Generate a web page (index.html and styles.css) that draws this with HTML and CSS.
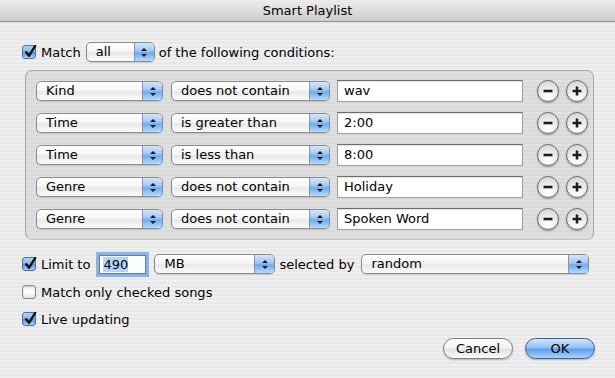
FILE: index.html
```html
<!DOCTYPE html>
<html>
<head>
<meta charset="utf-8">
<link rel="stylesheet" href="styles.css">
</head>
<body>
<div class="win">
  <div class="titlebar">Smart Playlist</div>
  <div class="content">
    <div class="match-row">
      <span class="cb on"><svg viewBox="0 0 14 14" width="14" height="14"><path d="M3.2 7.2 L6 10.8 L12.2 0.8" fill="none" stroke="#111" stroke-width="2.3" stroke-linecap="round" stroke-linejoin="round"/></svg></span>
      <span class="lbl l-match">Match</span>
      <div class="popup p-all"><span class="txt">all</span><span class="step"></span></div>
      <span class="lbl l-of">of the following conditions:</span>
    </div>

    <div class="rules">
      <div class="rule">
        <div class="popup p-field"><span class="txt">Kind</span><span class="step"></span></div>
        <div class="popup p-op"><span class="txt">does not contain</span><span class="step"></span></div>
        <div class="field f-val">wav</div>
        <span class="rb minus"><svg viewBox="0 0 22 22" width="22" height="22"><path d="M6.5 11 H15.5" stroke="#1e1e1e" stroke-width="2.6" stroke-linecap="butt"/></svg></span>
        <span class="rb plus"><svg viewBox="0 0 22 22" width="22" height="22"><path d="M6.5 11 H15.5 M11 6.5 V15.5" stroke="#1e1e1e" stroke-width="2.6"/></svg></span>
      </div>
      <div class="rule">
        <div class="popup p-field"><span class="txt">Time</span><span class="step"></span></div>
        <div class="popup p-op"><span class="txt">is greater than</span><span class="step"></span></div>
        <div class="field f-val">2:00</div>
        <span class="rb minus"><svg viewBox="0 0 22 22" width="22" height="22"><path d="M6.5 11 H15.5" stroke="#1e1e1e" stroke-width="2.6"/></svg></span>
        <span class="rb plus"><svg viewBox="0 0 22 22" width="22" height="22"><path d="M6.5 11 H15.5 M11 6.5 V15.5" stroke="#1e1e1e" stroke-width="2.6"/></svg></span>
      </div>
      <div class="rule">
        <div class="popup p-field"><span class="txt">Time</span><span class="step"></span></div>
        <div class="popup p-op"><span class="txt">is less than</span><span class="step"></span></div>
        <div class="field f-val">8:00</div>
        <span class="rb minus"><svg viewBox="0 0 22 22" width="22" height="22"><path d="M6.5 11 H15.5" stroke="#1e1e1e" stroke-width="2.6"/></svg></span>
        <span class="rb plus"><svg viewBox="0 0 22 22" width="22" height="22"><path d="M6.5 11 H15.5 M11 6.5 V15.5" stroke="#1e1e1e" stroke-width="2.6"/></svg></span>
      </div>
      <div class="rule">
        <div class="popup p-field"><span class="txt">Genre</span><span class="step"></span></div>
        <div class="popup p-op"><span class="txt">does not contain</span><span class="step"></span></div>
        <div class="field f-val">Holiday</div>
        <span class="rb minus"><svg viewBox="0 0 22 22" width="22" height="22"><path d="M6.5 11 H15.5" stroke="#1e1e1e" stroke-width="2.6"/></svg></span>
        <span class="rb plus"><svg viewBox="0 0 22 22" width="22" height="22"><path d="M6.5 11 H15.5 M11 6.5 V15.5" stroke="#1e1e1e" stroke-width="2.6"/></svg></span>
      </div>
      <div class="rule">
        <div class="popup p-field"><span class="txt">Genre</span><span class="step"></span></div>
        <div class="popup p-op"><span class="txt">does not contain</span><span class="step"></span></div>
        <div class="field f-val">Spoken Word</div>
        <span class="rb minus"><svg viewBox="0 0 22 22" width="22" height="22"><path d="M6.5 11 H15.5" stroke="#1e1e1e" stroke-width="2.6"/></svg></span>
        <span class="rb plus"><svg viewBox="0 0 22 22" width="22" height="22"><path d="M6.5 11 H15.5 M11 6.5 V15.5" stroke="#1e1e1e" stroke-width="2.6"/></svg></span>
      </div>
    </div>

    <div class="limit-row">
      <span class="cb on"><svg viewBox="0 0 14 14" width="14" height="14"><path d="M3.2 7.2 L6 10.8 L12.2 0.8" fill="none" stroke="#111" stroke-width="2.3" stroke-linecap="round" stroke-linejoin="round"/></svg></span>
      <span class="lbl l-limit">Limit to</span>
      <div class="field f-num"><span class="sel">490</span></div>
      <div class="popup p-unit"><span class="txt">MB</span><span class="step"></span></div>
      <span class="lbl l-sel">selected by</span>
      <div class="popup p-by"><span class="txt">random</span><span class="step"></span></div>
    </div>

    <div class="opt-row opt-checked">
      <span class="cb"></span>
      <span class="lbl">Match only checked songs</span>
    </div>
    <div class="opt-row opt-live">
      <span class="cb on"><svg viewBox="0 0 14 14" width="14" height="14"><path d="M3.2 7.2 L6 10.8 L12.2 0.8" fill="none" stroke="#111" stroke-width="2.3" stroke-linecap="round" stroke-linejoin="round"/></svg></span>
      <span class="lbl">Live updating</span>
    </div>

    <div class="buttons">
      <span class="btn cancel">Cancel</span>
      <span class="btn ok">OK</span>
    </div>
  </div>
</div>
</body>
</html>
```

FILE: styles.css
```css
* { box-sizing: border-box; }
html, body { margin: 0; padding: 0; }
body {
  width: 615px;
  height: 378px;
  overflow: hidden;
  font-family: "DejaVu Sans", "Liberation Sans", sans-serif;
  font-size: 13px;
  color: #000;
}
.win {
  width: 615px;
  height: 378px;
  background: repeating-linear-gradient(#efefef 0 2px, #e8e8e8 2px 4px);
  display: flex;
  flex-direction: column;
}
.titlebar {
  height: 22px;
  line-height: 21px;
  text-align: center;
  font-size: 13px;
  background: linear-gradient(#ececec, #d9d9d9 60%, #cfcfcf);
  border-bottom: 1px solid #8f8f8f;
  flex: none;
}
.content {
  display: flex;
  flex-direction: column;
  padding: 0 20px 0 22px;
}
.lbl { white-space: nowrap; }

/* checkbox */
.cb {
  width: 14px;
  height: 14px;
  flex: none;
  border-radius: 3px;
  border: 1px solid #888;
  background: linear-gradient(#f2f2f2, #ffffff 50%, #e4e4e4 100%);
  box-shadow: inset 0 1px 2px rgba(0,0,0,.18);
  position: relative;
  overflow: visible;
}
.cb.on {
  border-color: #4d6f9f;
  background: linear-gradient(#b7d2f3, #86b3ea 50%, #5c97e0 55%, #a9d0fa);
  box-shadow: none;
}
.cb svg { position: absolute; left: 0; top: -1px; }

/* popup */
.popup {
  height: 20px;
  display: flex;
  align-items: center;
  border: 1px solid #8a8a8a;
  border-radius: 5px;
  background: linear-gradient(#ffffff 0%, #f6f6f6 45%, #e8e8e8 55%, #fbfbfb 100%);
  box-shadow: 0 1px 1px rgba(0,0,0,.12);
  overflow: hidden;
  padding-left: 9px;
  flex: none;
}
.popup .txt { flex: 1; white-space: nowrap; line-height: 18px; }
.step {
  width: 20px;
  align-self: stretch;
  border-left: 1px solid #7e96b8;
  background: linear-gradient(#d4e6fc, #9fc5f2 45%, #6fa8ec 55%, #b8daff);
  display: flex;
  flex-direction: column;
  align-items: center;
  justify-content: center;
  gap: 3px;
}
.step::before, .step::after {
  content: "";
  width: 0;
  height: 0;
  border-left: 3px solid transparent;
  border-right: 3px solid transparent;
}
.step::before { border-bottom: 3px solid #1a1a1a; }
.step::after { border-top: 3px solid #1a1a1a; }

/* match row */
.match-row {
  margin-top: 20px;
  height: 20px;
  display: flex;
  align-items: center;
}
.l-match { margin-left: 5px; }
.p-all { width: 69px; margin-left: 5px; }
.l-of { margin-left: 4px; }

/* rules box */
.rules {
  margin-top: 8px;
  margin-left: 3px;
  width: 569px;
  height: 170px;
  border: 1px solid #a9a9a9;
  border-bottom-color: #c4c4c4;
  border-radius: 7px;
  background: rgba(0,0,0,.06);
  padding: 9px 0 0 10px;
  display: flex;
  flex-direction: column;
  gap: 10px;
}
.rule {
  height: 22px;
  display: flex;
  align-items: center;
}
.p-field { width: 127px; }
.p-op { width: 159px; margin-left: 8px; }
.field {
  height: 22px;
  border: 1px solid #9c9c9c;
  border-top-color: #6e6e6e;
  background: #fff;
  box-shadow: inset 0 1px 1px rgba(0,0,0,.12);
  padding: 0 6px;
  line-height: 20px;
  white-space: nowrap;
  flex: none;
}
.f-val { width: 186px; margin-left: 7px; }
.rb {
  width: 22px;
  height: 22px;
  flex: none;
  border-radius: 50%;
  border: 1px solid #6b6b6b;
  background: radial-gradient(circle at 50% 75%, #ffffff 0%, #ededed 45%, #c9c9c9 100%);
  box-shadow: 0 1px 2px rgba(0,0,0,.35);
  position: relative;
}
.rb svg { position: absolute; left: -1px; top: -1px; }
.minus { margin-left: 14px; }
.plus { margin-left: 7px; }

/* limit row */
.limit-row {
  margin-top: 12px;
  height: 24px;
  display: flex;
  align-items: center;
}
.l-limit { margin-left: 5px; }
.f-num {
  width: 47px;
  height: 19px;
  margin-left: 9px;
  padding: 0 3px;
  line-height: 17px;
  box-shadow: 0 0 0 3px rgba(110,160,225,.75);
  border-color: #5a7fb3;
}
.sel { background: #b5d4fb; }
.p-unit { width: 121px; margin-left: 8px; }
.l-sel { margin-left: 4px; }
.p-by { width: 228px; margin-left: 7px; }

/* option rows */
.opt-row {
  height: 18px;
  display: flex;
  align-items: center;
}
.opt-row .lbl { margin-left: 5px; }
.opt-checked { margin-top: 7px; }
.opt-live { margin-top: 9px; }

/* buttons */
.buttons {
  margin-top: 10px;
  display: flex;
  justify-content: flex-end;
  gap: 12px;
}
.btn {
  width: 70px;
  height: 21px;
  border-radius: 11px;
  text-align: center;
  line-height: 19px;
  font-size: 13px;
  box-shadow: 0 1px 2px rgba(0,0,0,.25);
}
.cancel {
  border: 1px solid #808080;
  background: linear-gradient(#ffffff, #f3f3f3 45%, #e2e2e2 55%, #fdfdfd);
}
.ok {
  border: 1px solid #3f5f90;
  background: linear-gradient(#d2e5fb, #93c0f1 45%, #5e9fe9 55%, #a8d3fc);
}
```
